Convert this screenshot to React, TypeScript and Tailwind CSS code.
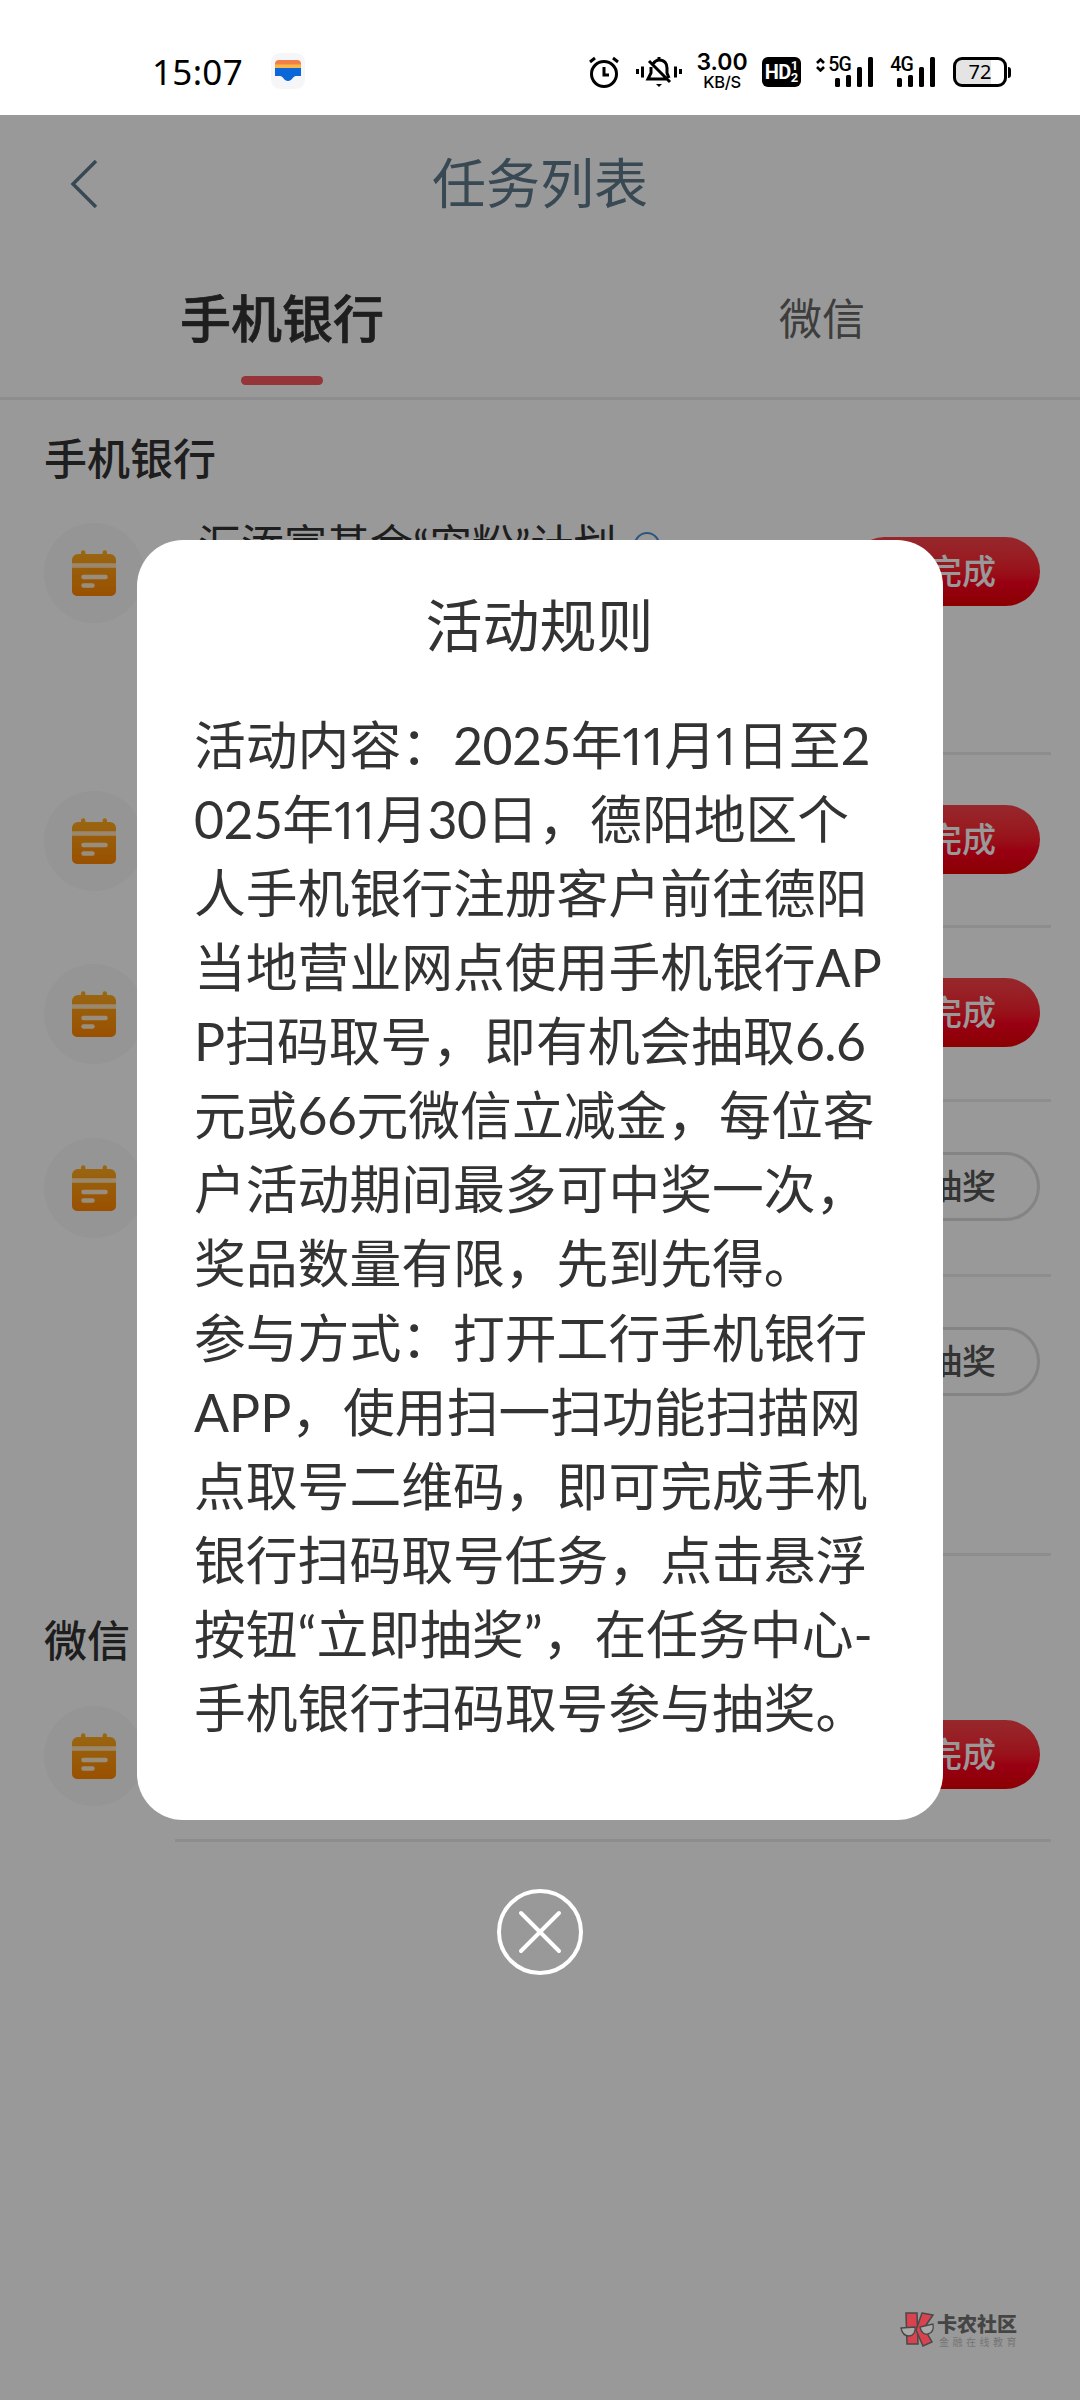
import { clsx } from 'clsx'

const tasks = [
  { title: '汇添富基金“宠粉”计划', action: '去完成', done: false, icon: true, row: 'h-[268px]' },
  { title: '', action: '去完成', done: false, icon: true, row: 'h-[173px]' },
  { title: '', action: '去完成', done: false, icon: true, row: 'h-[174px]' },
  { title: '', action: '去抽奖', done: true, icon: true, row: 'h-[175px]' },
  { title: '', action: '去抽奖', done: true, icon: false, row: 'h-[279px]' },
]

const rules = [
  '活动内容：2025年11月1日至2',
  '025年11月30日，德阳地区个',
  '人手机银行注册客户前往德阳',
  '当地营业网点使用手机银行AP',
  'P扫码取号，即有机会抽取6.6',
  '元或66元微信立减金，每位客',
  '户活动期间最多可中奖一次，',
  '奖品数量有限，先到先得。',
  '参与方式：打开工行手机银行',
  'APP，使用扫一扫功能扫描网',
  '点取号二维码，即可完成手机',
  '银行扫码取号任务，点击悬浮',
  '按钮“立即抽奖”，在任务中心-',
  '手机银行扫码取号参与抽奖。',
]

function Signal({ label, arrows }: { label: string; arrows?: boolean }) {
  return (
    <div className="relative flex h-[30px] w-[57px] items-end justify-end">
      <span className="absolute -top-[3px] right-[22px] flex items-center font-[Roboto] text-[19.5px] leading-[22px] font-medium tracking-[-0.8px]">
        {arrows && (
          <svg className="mr-[3px]" width="9" height="14" viewBox="0 0 9 14" fill="none" stroke="#000" strokeWidth="2.6">
            <path d="M1 5l3.5-3.5L8 5M1 9l3.5 3.5L8 9" />
          </svg>
        )}
        {label}
      </span>
      <svg width="38" height="30" viewBox="0 0 38 30">
        <rect x="0" y="21" width="5" height="9" rx="1.5" />
        <rect x="11" y="18" width="5" height="12" rx="1.5" />
        <rect x="22" y="10" width="5" height="20" rx="1.5" />
        <rect x="33" y="0" width="5" height="30" rx="1.5" />
      </svg>
    </div>
  )
}

function StatusBar() {
  return (
    <div className="flex h-[115px] shrink-0 items-center bg-white pt-[29px] pl-[152px] text-black">
      <span className="w-[93px] pb-[2px] font-['Noto_Sans'] text-[35px] leading-none tracking-[0.3px] whitespace-nowrap">15:07</span>
      <svg className="ml-[26px]" width="34" height="38" viewBox="0 0 34 38">
        <rect width="34" height="36" rx="9" fill="#f6f6f8" />
        <path d="M4 11a4 4 0 0 1 4-4h18a4 4 0 0 1 4 4v4H4z" fill="#f08048" />
        <path d="M4 11.5h26V17H4z" fill="#f8b848" />
        <path d="M4 15h26v8h-5c-3 0-4 5-8 5s-5-5-8-5H4z" fill="#0b66d8" />
      </svg>
      <div className="ml-[284px] flex items-center">
        <svg width="30" height="32" viewBox="0 0 30 32" fill="none" stroke="#000" strokeWidth="3">
          <circle cx="15" cy="18" r="12.5" />
          <path d="M15 11v8h5M1 6l5-4M29 6l-5-4" />
        </svg>
        <svg className="ml-[17px]" width="46" height="32" viewBox="0 0 46 32" fill="none" stroke="#000" strokeWidth="3">
          <path d="M1.5 13v5M6.5 10.500v11M44.500 13v5M39.500 10.500v11M17 8c2-3 4-4 6-4 6 0 8 4 8 8v5l2 5M15 11v6l-3 6h18M13 5l21 21M23 1v3" />
          <path d="M20 28h6l-3 3z" fill="#000" stroke="none" />
        </svg>
        <div className="ml-[14px] flex w-[52px] flex-col items-center font-[Inter] font-semibold">
          <span className="text-[23px] leading-[21px] whitespace-nowrap">3.00</span>
          <span className="text-[16.5px] leading-[19px] font-medium tracking-[-0.3px]">KB/S</span>
        </div>
        <div className="ml-[14px] flex h-[30px] w-[39px] items-center justify-center rounded-[6px] bg-black font-[Roboto] text-white">
          <span className="text-[20px] font-bold tracking-[-0.5px]">HD</span>
          <span className="flex flex-col text-[13px] leading-[12px] font-bold">
            <span>1</span>
            <span>2</span>
          </span>
        </div>
        <div className="ml-[15px]">
          <Signal label="5G" arrows />
        </div>
        <div className="ml-[5px]">
          <Signal label="4G" />
        </div>
        <div className="ml-[18px] flex h-[30px] w-[54px] items-center justify-center rounded-[9px] border-[3px] border-black bg-[linear-gradient(90deg,#e4e4e4_72%,#fff_72%)] font-['Noto_Sans'] text-[20px] leading-none">
          72
        </div>
        <div className="ml-[1px] h-[11px] w-[3px] rounded-r bg-black" />
      </div>
    </div>
  )
}

function TaskIcon() {
  return (
    <div className="flex size-[100px] items-center justify-center rounded-full bg-[#f8f8f8]">
      <svg width="46" height="48" viewBox="0 0 46 48">
        <defs>
          <linearGradient id="task" x1="0" y1="0" x2="0" y2="1">
            <stop offset="0" stopColor="#ffac20" />
            <stop offset="1" stopColor="#ff8600" />
          </linearGradient>
        </defs>
        <path
          fill="url(#task)"
          d="M7 5h3V3.500a2.200 2.200 0 0 1 4.400 0V5h17.200V3.500a2.200 2.200 0 0 1 4.400 0V5h3a6 6 0 0 1 6 6v31a5 5 0 0 1-5 5H6a5 5 0 0 1-5-5V11a6 6 0 0 1 6-6z"
        />
        <path stroke="#ffe3b8" strokeWidth="4.500" d="M1 16.500h44" />
        <path stroke="#ffedd0" strokeWidth="4.500" strokeLinecap="round" d="M12.500 28h22M12.500 36.500h9" />
      </svg>
    </div>
  )
}

function TaskRow({ title, action, done, icon, row }: { title: string; action: string; done: boolean; icon: boolean; row: string }) {
  return (
    <div className={clsx('flex shrink-0 pr-[29px] pl-[44px]', row)}>
      <div className="w-[131px] shrink-0 pt-[36px]">{icon && <TaskIcon />}</div>
      <div className="flex grow items-start border-b-[3px] border-[#ececec] pr-[11px] pl-[23px]">
        <div className="flex grow items-center pt-[28px] text-[43px] leading-[60px] whitespace-nowrap text-[#333]">
          {title}
          {title && <span className="ml-[18px] size-[26px] rounded-full border-2 border-[#4a8fd0]" />}
        </div>
        <button
          className={clsx(
            'mt-[50px] h-[69px] w-[190px] shrink-0 rounded-full pb-[2px] text-[34px] leading-none font-medium',
            done ? 'border-[3px] border-[#dcdcdc] text-[#555]' : 'bg-linear-to-b from-[#fb424a] via-[#ff0020] via-65% to-[#e80000] text-white',
          )}
        >
          {action}
        </button>
      </div>
    </div>
  )
}

// The digit one is set tighter than the other figures
function RuleLine({ text }: { text: string }) {
  return (
    <div className="whitespace-nowrap">
      {text.split(/(1+|[02-9.]+)/).map((part, i) => {
        if (part.startsWith('1')) {
          return (
            <span key={i} className="mr-[4px] -ml-[4px] font-['Noto_Sans'] tracking-[-8.8px]">
              {part}
            </span>
          )
        }
        return (
          <span key={i} className={clsx(/^\d/.test(part) && 'tracking-[-0.6px]')}>
            {part}
          </span>
        )
      })}
    </div>
  )
}

function RulesDialog() {
  return (
    <div className="absolute inset-0 flex flex-col items-center bg-black/40 pt-[425px]">
      <div className="h-[1280px] w-[806px] shrink-0 rounded-[46px] bg-white pl-[57px] text-[#333]">
        <h2 className="-ml-[58px] pt-[45px] text-center text-[57px] leading-[80px]">活动规则</h2>
        <div className="mt-[43px] text-[51.8px] leading-[74.07px]">
          {rules.map((line) => (
            <RuleLine key={line} text={line} />
          ))}
        </div>
      </div>
      <svg className="mt-[68px]" width="88" height="88" viewBox="0 0 88 88" fill="none" stroke="#fff" strokeLinecap="round">
        <circle cx="44" cy="44" r="41" strokeWidth="4" />
        <path d="M25 25l38 38M63 25L25 63" strokeWidth="4" />
      </svg>
    </div>
  )
}

function Watermark() {
  return (
    <div className="absolute top-[2311px] left-[900px] flex">
      <svg width="36" height="38" viewBox="0 0 36 38">
        <g fill="#d8434f" stroke="#484848" strokeWidth="1.500">
          <path d="M6 2h11l1 31H7z" />
          <path d="M22 2l11 2-9 13 8 14-9 4-7-16z" />
        </g>
        <g fill="#aaa" stroke="#484848" strokeWidth="1.300">
          <path d="M1 17l14-1c1 5-2 9-6 9s-7-3-8-8zM20 16l13-3c1 6-1 9-5 10s-7-2-8-7z" />
        </g>
      </svg>
      <div className="ml-[1px] whitespace-nowrap">
        <div className="pt-[1px] text-[20px] leading-[24px] font-black text-[#454545]">卡农社区</div>
        <div className="ml-[2px] text-[10px] leading-[13px] tracking-[3.5px] text-[#757575]">金融在线教育</div>
      </div>
    </div>
  )
}

export default function App() {
  return (
    <div className="relative flex h-[2400px] w-[1080px] flex-col overflow-hidden bg-white font-[Lato,'Noto_Sans_CJK_SC',sans-serif]">
      <StatusBar />
      <div className="relative flex h-[2285px] flex-col">
        <header className="flex h-[138px] shrink-0 items-center text-[#5f7b8b]">
          <svg className="ml-[69px]" width="30" height="52" viewBox="0 0 30 52" fill="none" stroke="currentColor" strokeWidth="3.500">
            <path d="M27 3L4 26l23 23" />
          </svg>
          <h1 className="grow pr-[99px] text-center text-[54px] leading-none">任务列表</h1>
        </header>
        <div className="flex h-[147px] shrink-0 border-b-[3px] border-[#ebebeb]">
          <div className="flex w-[564px] flex-col items-center pt-[31px] text-[51px] leading-[70px] font-medium text-[#333] [-webkit-text-stroke:0.7px_#333]">
            手机银行
            <span className="mt-[22px] h-[9px] w-[82px] rounded-full bg-[#f8585f]" />
          </div>
          <div className="grow pt-[31px] pl-[215px] text-[43px] leading-[70px] text-[#666]">微信</div>
        </div>
        <h3 className="h-[87px] shrink-0 pt-[29px] pl-[44px] text-[43px] leading-[60px] font-medium text-[#333]">手机银行</h3>
        {tasks.map((task, i) => (
          <TaskRow key={i} {...task} />
        ))}
        <h3 className="h-[114px] shrink-0 pt-[55px] pl-[44px] text-[43px] leading-[60px] font-medium text-[#333]">微信</h3>
        <TaskRow title="" action="去完成" done={false} icon row="h-[172px]" />
        <RulesDialog />
      </div>
      <Watermark />
    </div>
  )
}
